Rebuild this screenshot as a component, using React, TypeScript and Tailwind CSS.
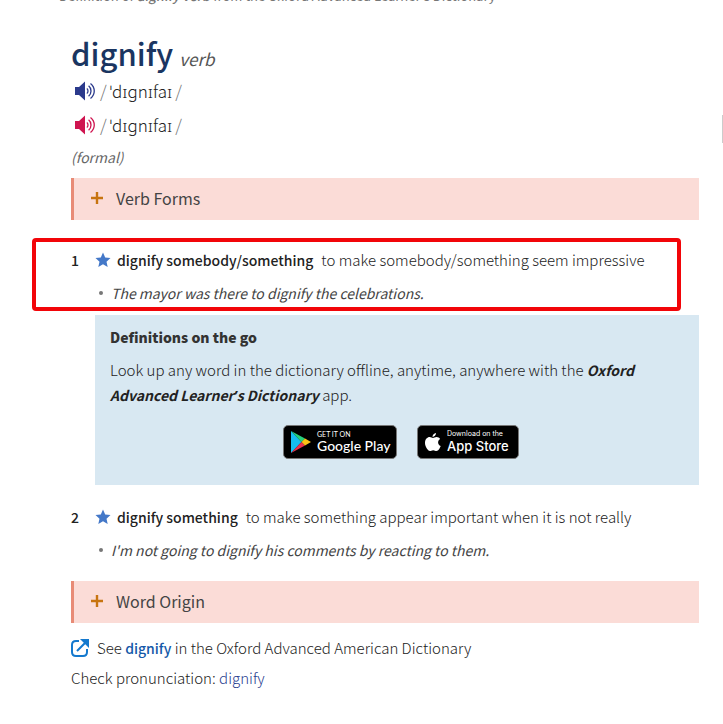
import type { ReactNode } from "react";

function Speaker({ className, label }: { className: string; label: string }) {
  return (
    <button type="button" aria-label={label} className={className}>
      <svg width="22" height="20" viewBox="0 0 22 20" fill="none" stroke="currentColor" aria-hidden="true">
        <path d="M1 6h4l6-5.500v19L5 14H1z" fill="currentColor" stroke="none" />
        <path d="M12.800 7.500c1.600 1 1.600 4 0 5M14.600 4.800c3.200 2.600 3.200 7.800 0 10.400M16.500 2.500c5 4 5 11 0 15" strokeWidth="1.300" />
      </svg>
    </button>
  );
}

function Pronunciation({ color, label }: { color: string; label: string }) {
  return (
    <div className="flex h-[34px] items-center gap-1 pl-[3px]">
      <Speaker className={color} label={label} />
      <span className="flex gap-[3px] font-['Noto_Sans_CJK_SC','Noto_Sans',sans-serif] text-[17px] leading-6 font-light text-[#222]">
        <span className="text-[#777]">/</span>ˈdɪɡnɪfaɪ<span className="text-[#777]">/</span>
      </span>
    </div>
  );
}

function Expander({ children }: { children: ReactNode }) {
  return (
    <button
      type="button"
      className="flex h-[42px] w-full items-center gap-3 border-l-[3px] border-[#e88b76] bg-[#fbdcd7] pb-0.5 pl-4 text-left text-base font-normal text-[#444]"
    >
      <svg width="14" height="14" viewBox="0 0 14 14" stroke="#c77410" strokeWidth="2.400" aria-hidden="true">
        <path d="M7 1v12M1 7h12" />
      </svg>
      {children}
    </button>
  );
}

function Sense({ n, pattern, meaning, example }: { n: number; pattern: string; meaning: string; example: string }) {
  return (
    <div>
      <div className="flex h-8 items-center">
        <span className="w-6 text-sm font-medium">{n}</span>
        <svg width="16" height="16" viewBox="0 0 16 16" fill="#4478c8" aria-hidden="true">
          <path d="M8 .5l2.200 5 5.300.5-4 3.700 1.200 5.400L8 12.300l-4.700 2.800 1.200-5.400L.5 6l5.300-.5z" />
        </svg>
        <span className="ml-1.5 text-sm font-medium">{pattern}</span>
        <span className="ml-2">{meaning}</span>
      </div>
      <ul className="pl-7">
        <li className="flex h-[34px] items-center gap-2 text-sm font-normal italic text-[#444]">
          <span className="size-1 rounded-full bg-[#777]" />
          {example}
        </li>
      </ul>
    </div>
  );
}

function StoreBadges() {
  return (
    <div className="flex justify-center gap-5 pt-[18px] pl-2 font-normal text-white">
      <button type="button" className="flex h-[34px] w-[114px] items-center gap-1.5 rounded-[5px] border border-[#777] bg-black pl-[7px] text-left font-[Lato,sans-serif]">
        <svg width="20" height="22" viewBox="0 0 20 22" aria-hidden="true">
          <path d="M0 0l10.500 11L0 22z" fill="#16bdf1" />
          <path d="M0 0l14 7.500L10.500 11z" fill="#25d17c" />
          <path d="M0 22l14-7.500L10.500 11z" fill="#ea3350" />
          <path d="M14 7.500l6 3.500-6 3.500L10.500 11z" fill="#fbc315" />
        </svg>
        <span>
          <span className="block text-[7px] leading-[8px]">GET IT ON</span>
          <span className="block text-sm leading-4 font-medium">Google Play</span>
        </span>
      </button>
      <button type="button" className="flex h-[34px] w-[102px] items-center gap-1.5 rounded-[5px] border border-[#777] bg-black pl-[7px] text-left font-[Inter,sans-serif]">
        <svg width="16" height="19" viewBox="0 0 16 19" fill="currentColor" aria-hidden="true">
          <path d="M11 0c.2 2-1.500 4-3.400 4C7.300 2.200 9 .3 11 0zM8 5c.9 0 2-.9 3.600-.9 1.400 0 2.700.7 3.500 1.900-3 1.900-2.500 5.800.6 7-.7 1.900-2.300 5-4.200 5-1.300 0-1.700-.8-3.300-.8s-2.100.8-3.300.8C2.700 18-.1 13.400 0 9.700.1 6.300 2.300 4.100 4.600 4.100 6 4.100 7.100 5 8 5z" />
        </svg>
        <span>
          <span className="block text-[7px] leading-[8px]">Download on the</span>
          <span className="block text-[13px] leading-4 font-medium">App Store</span>
        </span>
      </button>
    </div>
  );
}

export default function App() {
  return (
    <div className="relative min-h-screen overflow-hidden bg-white font-['Noto_Sans_CJK_SC','Noto_Sans',sans-serif] text-[15px] font-light text-[#222]">
      <span className="absolute top-[115px] right-0 h-7 w-px bg-[#ccc]" />
      <main className="-mt-4 pr-6 pl-[71px]">
        <p className="-ml-3 h-6 text-[13px] leading-6 font-normal text-[#777]">
          Definition of <b className="font-medium italic">dignify verb</b> from the Oxford Advanced Learner's Dictionary
        </p>
        <div className="mt-6 flex h-[42px] items-baseline gap-1.5">
          <h1 className="text-[31px] leading-[42px] font-medium text-[#1a3561]">dignify</h1>
          <span className="text-[17px] font-normal italic text-[#555]">verb</span>
        </div>
        <Pronunciation color="text-[#2b3a8c]" label="Play British pronunciation" />
        <Pronunciation color="text-[#cf1550]" label="Play American pronunciation" />
        <p className="h-9 text-sm leading-[30px] font-normal italic text-[#666]">(formal)</p>
        <Expander>Verb Forms</Expander>

        <div className="relative mt-6">
          <div className="pointer-events-none absolute -top-1.5 -right-[-18px] -left-[39px] h-[73px] rounded-[4px] border-4 border-[#f20509]" />
          <Sense
            n={1}
            pattern="dignify somebody/something"
            meaning="to make somebody/something seem impressive"
            example="The mayor was there to dignify the celebrations."
          />
        </div>

        <aside className="mt-[5px] ml-6 h-[170px] bg-[#d8e8f2] px-[15px] pt-2">
          <h2 className="text-sm leading-7 font-black text-[#333]">Definitions on the go</h2>
          <p className="mt-1.5 leading-[25px]">
            Look up any word in the dictionary offline, anytime, anywhere with the{" "}
            <b className="text-sm leading-none font-bold text-[#222] italic">
              Oxford Advanced Learner<span className="font-['Noto_Sans',sans-serif]">’</span>s Dictionary
            </b>{" "}
            app.
          </p>
          <StoreBadges />
        </aside>

        <div className="mt-4 mb-[14px]">
          <Sense
            n={2}
            pattern="dignify something"
            meaning="to make something appear important when it is not really"
            example="I'm not going to dignify his comments by reacting to them."
          />
        </div>
        <Expander>Word Origin</Expander>

        <p className="mt-2.5 flex h-[30px] items-center">
          <svg width="18" height="18" viewBox="0 0 18 18" fill="none" stroke="#1479ce" strokeWidth="2" aria-hidden="true">
            <path d="M8 2H5Q1 2 1 6v7q0 4 4 4h7q4 0 4-4v-3M6 12L14 4" />
            <path d="M9 0h9v9z" fill="#1479ce" stroke="none" />
          </svg>
          <span className="ml-2">
            See <a href="#american" className="text-sm font-medium text-[#1458a8]">dignify</a> in the Oxford Advanced American Dictionary
          </span>
        </p>
        <p className="h-[30px] leading-[30px]">
          Check pronunciation: <a href="#pronunciation" className="text-[#2a4190]">dignify</a>
        </p>
      </main>
    </div>
  );
}
